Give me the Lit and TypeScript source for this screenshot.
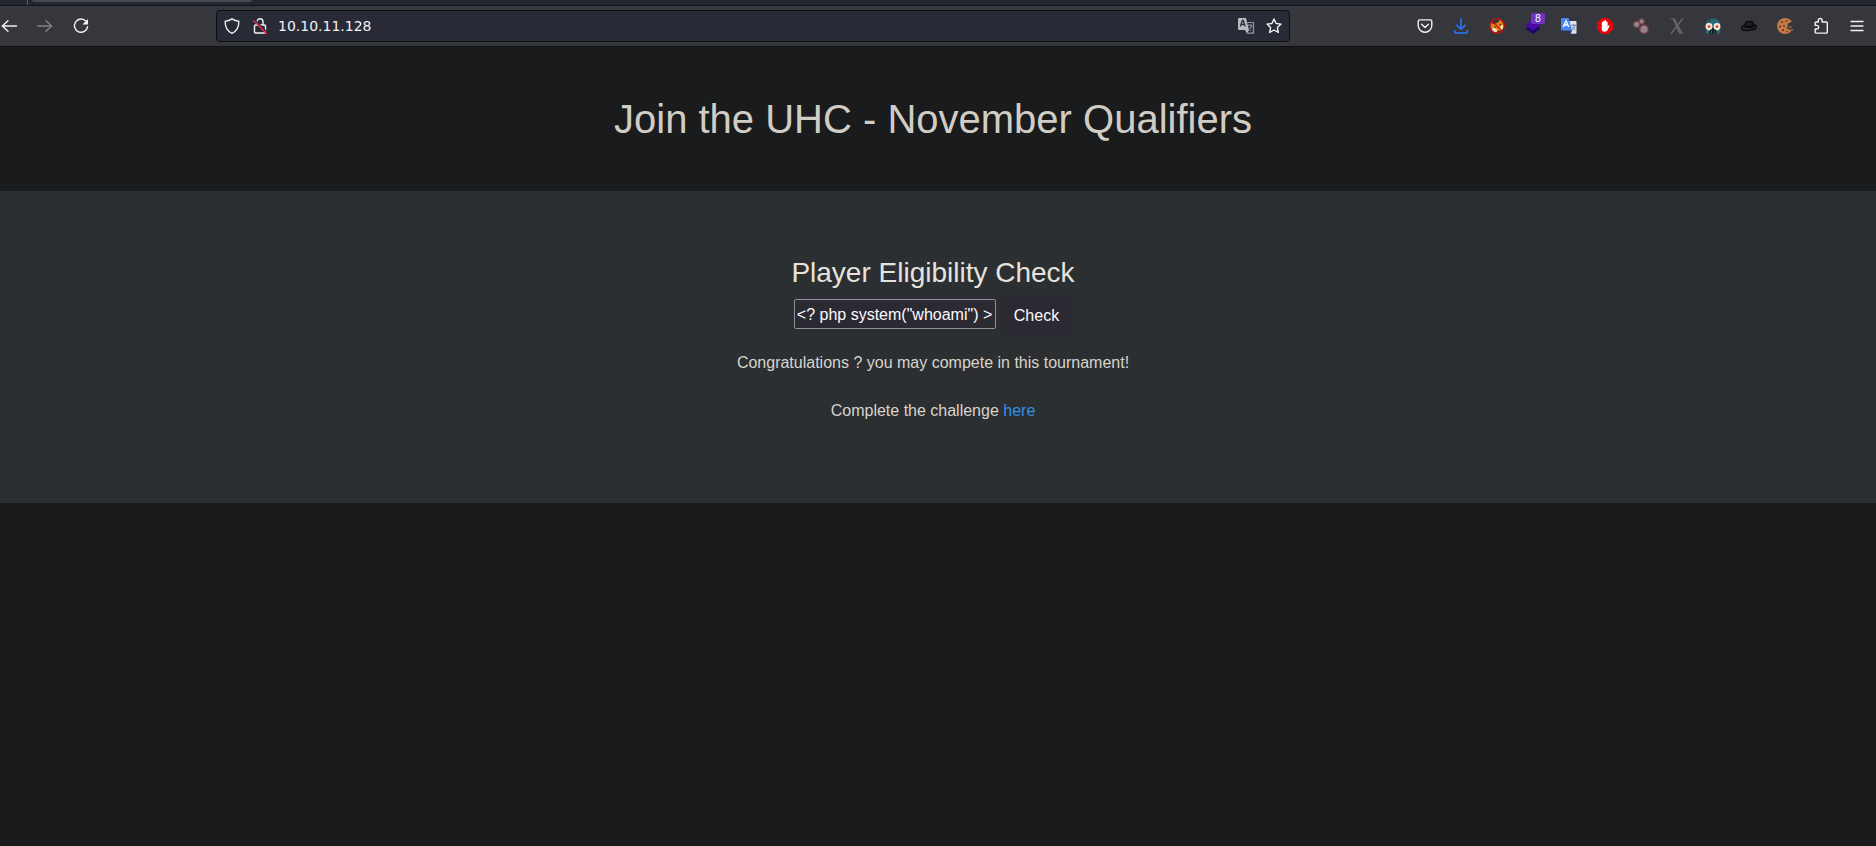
import { LitElement, html, css, svg } from "lit";
import { customElement } from "lit/decorators.js";

const icon = (body: unknown, cls = "") =>
  html`<svg class="icon ${cls}" viewBox="0 0 16 16" aria-hidden="true">${body}</svg>`;

const back = svg`<path class="line" d="M15.5 8H1.2M7 2.7L1.4 8L7 13.3"/>`;
const forward = svg`<path class="line" d="M.5 8h14.3M9 2.7L14.6 8L9 13.3"/>`;
const reload = svg`<path class="line" d="M13.1 3.4A6.600 6.600 0 1 0 14.600 8.600"/><path class="fill" d="M15 .9v5.600H9.400z"/>`;
const shield = svg`<path class="line" d="M8 .9c2 1.4 4.300 2.100 6.800 2.200.2 5.300-1.500 9.900-6.800 12.200C2.700 13 1 8.400 1.200 3.100 3.700 3 6 2.300 8 .9z"/>`;
const lock = svg`<path class="line" d="M5 6.500V3.800a3 3 0 0 1 6 0V7M3.700 7h8.600a1.200 1.200 0 0 1 1.200 1.200v5.600a1.200 1.200 0 0 1-1.200 1.200H3.700a1.200 1.200 0 0 1-1.200-1.200V8.200A1.200 1.200 0 0 1 3.700 7z"/><path d="M2.400 1.600L15.400 14.600" stroke="#282a36" stroke-width="1.400"/><path d="M1.200 2.200L14.700 15.600" stroke="#e22850" stroke-width="1.500"/>`;
const pageTranslate = svg`<path fill="#b9bac0" d="M1 0h7l3 12H1a1 1 0 0 1-1-1V1a1 1 0 0 1 1-1z"/><path d="M2.300 8.500L4.400 2.500h.8l2.100 6M3 6.500h3.600" fill="none" stroke="#282a36" stroke-width="1.300"/><path fill="#b9bac0" d="M7 12h4l-2 3.500z"/><path d="M9.500 4.500h6v10.700H8.800M10.700 8c0-1.600 3.300-1.600 3 .2-.2 1-1.500.8-1.500 2.300m0 1v1.300" fill="none" stroke="#96979e" stroke-width="1.200"/>`;
const star = svg`<path class="line" d="M8 1l2.100 4.500 4.900.6-3.600 3.400.9 4.900L8 12l-4.300 2.400.9-4.900L1 6.100l4.900-.6z"/>`;
const pocket = svg`<path class="line" d="M2.700 1.900h10.600a1.500 1.500 0 0 1 1.500 1.500v4a6.800 6.800 0 0 1-13.600 0v-4a1.500 1.500 0 0 1 1.500-1.500z"/><path class="line" d="M4.600 6.200L8 9.400l3.400-3.200"/>`;
const download = svg`<path fill="none" stroke="#2a78ff" stroke-width="1.500" d="M8 .3v11M3.300 6.700L8 11.300l4.700-4.600M1.700 12v1.700q0 1.300 1.300 1.300h10q1.300 0 1.300-1.300V12"/>`;
const fox = svg`<path fill="#e2820f" d="M1.500 9.500L2 5l3.300 1.300L9.500 4l1.800-3 2.400 3.500L14.500 9l-2.500 3.500L7.500 14z"/><path fill="#f6dfb8" d="M2.500 10.500l3.500-.5 2.500 2-1.200 2.800-3.300-1.500zM11.500 7.800l3-1.300-.3 4-2.700 1.800z"/><path fill="#5b2b10" d="M5.500 8.500h1.600v1.300H5.500zM10.700 6h1.400v1.400h-1.400zM8.600 12.500h1.800v1.400H8.600z"/><circle cx="8" cy="8" r="7.400" fill="none" stroke="#c40c0c" stroke-width="1.200"/><path d="M2.900 2.900l10.200 10.200" stroke="#c40c0c" stroke-width="1.200"/>`;
const layers = svg`<path fill="#1d0a6b" d="M.3 10.500L8 5.300l7.700 5.200L8 16z"/><path fill="#4b0aa8" d="M.3 7L8 1.500 15.700 7 8 12.300z"/>`;
const translate = svg`<path fill="#dde1e8" d="M7 3h7.500q1 0 1 1v10.800q0 1-1 1H10z"/><path fill="none" stroke="#6784b4" d="M10.300 7.200h4.600M12.500 6v1.200M14.300 7.200q-.7 3-3.500 5M11.200 8.600q1 2 3.200 3.300"/><path fill="#4a86f0" d="M1 0h6.500l3.700 12.500H1q-1 0-1-1V1q0-1 1-1z"/><path fill="#214c9c" d="M7.400 12.500h3.800L9.800 15.800z"/><path fill="none" stroke="#fff" stroke-width="1.300" d="M2.200 9L5 2.800 7.800 9M3.200 7h3.600"/>`;
const stopHand = svg`<path fill="#e4060b" d="M4.700 0h6.600L16 4.700v6.600L11.300 16H4.700L0 11.300V4.700z"/><path fill="#fff" d="M4.800 4.200q.8-.7 1.400 0V3q.8-.8 1.500 0v-.6q.8-.7 1.500 0V4q.8-.7 1.400 0v4.200l1-1q.9-.2 1 .6l-2 4.200q-.9 1.700-3 1.700-2.800 0-2.800-3z"/>`;
const dots = svg`<g fill="#98858b" stroke="#7d454b" stroke-width="1.200"><circle cx="3.600" cy="6.500" r="3"/><circle cx="8.600" cy="3.400" r="2.500"/><circle cx="11" cy="11.300" r="4.100"/></g>`;
const cross = svg`<path fill="#636363" d="M1.800.2h4L14 15.800h-3.800L3.700 1.500H1.800z"/><path fill="none" stroke="#636363" stroke-width="1.700" d="M14 .3L2 15.700"/>`;
const spy = svg`<path fill="#286975" d="M.8 7Q1 .4 8 .4T15.200 7v8.600H.8z"/><path fill="#122c33" d="M3 3l2.500-1.500L5 3.500zM4 9.500h8L13 13H3z"/><path fill="#e8c6b0" d="M2.500 11h2.500v1.500H2.500zM11 11h2.500v1.500H11z"/><circle cx="4" cy="8.500" r="2.800" fill="#f5d8c8" stroke="#f3efe9" stroke-width="1.300"/><circle cx="12" cy="8.500" r="2.800" fill="#f5d8c8" stroke="#f3efe9" stroke-width="1.300"/><circle cx="4" cy="8.500" r="1.500" fill="#dd5a38"/><circle cx="12" cy="8.500" r="1.500" fill="#dd5a38"/><path fill="#101b20" d="M4.500 12.800h7v2.800h-7z"/><path fill="#a9b4b5" d="M6 13.500h1v1H6zM9 13.500h1v1H9z"/>`;
const hat = svg`<ellipse cx="8" cy="9.500" rx="7.500" ry="2.900" transform="rotate(-6 8 9.500)" fill="#292b30" stroke="#08090a" stroke-width="1.300"/><path fill="#1d1e22" stroke="#08090a" stroke-width="1.200" d="M4 9L4.600 4.200Q8 2.700 11.700 3.900L12.500 8.500Q8 10.500 4 9z"/><path d="M4.200 8q4 1.500 8.100 0" fill="none" stroke="#08090a" stroke-width="1.500"/>`;
const cookie = svg`<path fill="#c47a49" d="M8 0q4.300 0 7 3.600L10.300 6l1 2.200-1.800 1.600 2 1.200 3 1.800Q12 16 8 16A8 8 0 1 1 8 0z"/><g fill="#6c3620"><circle cx="5" cy="4" r="1.100"/><circle cx="9.500" cy="3" r="1"/><circle cx="3.200" cy="8.500" r="1.100"/><circle cx="7" cy="8" r=".9"/><circle cx="6" cy="12.200" r="1.100"/><circle cx="10" cy="13.500" r=".8"/></g><path fill="#c47a49" d="M12.300 8.700l1.500-.7.700 1.700-1.500.7zM14.300 11h1.500v1.400h-1.500z"/>`;
const puzzle = svg`<path class="line" d="M5.300 4V2.400a1.900 1.900 0 0 1 3.800 0V4h4.300q.9 0 .9.900v9.300q0 .9-.9.900H3.100q-.9 0-.9-.9V11h1.600a1.800 1.800 0 0 0 0-3.600H2.200V4.900q0-.9.900-.9z"/>`;
const menu = svg`<path class="line" d="M2 3.500h12M2 8h12M2 12.500h12"/>`;

const extensions = [
  { label: "Save to Pocket", art: pocket },
  { label: "Downloads", art: download },
  { label: "Fox proxy", art: fox },
  { label: "Technology profiler", art: layers, badge: "8" },
  { label: "Translator", art: translate },
  { label: "Content blocker", art: stopHand },
  { label: "Containers", art: dots },
  { label: "X tools", art: cross },
  { label: "User agent", art: spy },
  { label: "Hat tools", art: hat },
  { label: "Cookie editor", art: cookie },
  { label: "Extensions", art: puzzle },
  { label: "Menu", art: menu },
];

@customElement("browser-chrome")
export class BrowserChrome extends LitElement {
  static styles = css`
    :host { display: block; font-family: "DejaVu Sans", sans-serif; color: #f2f2f4; }
    .tabs { height: 5px; background: #23252f; border-bottom: 1px solid #14151c; display: flex; overflow: hidden; }
    .divider { width: 28px; border-right: 1px solid #5b5d66; box-sizing: border-box; }
    .tab { width: 220px; height: 2px; margin-left: 4px; background: #464850; border-radius: 0 0 3px 3px; }
    .toolbar { display: flex; align-items: center; height: 40px; padding-right: 1px; overflow: hidden; background: #35373d; border-bottom: 1px solid #0e0f12; }
    .nav, .extensions { display: flex; flex: none; }
    .nav { margin-left: -9px; }
    button { appearance: none; border: 0; background: none; padding: 0; margin: 0; color: inherit; font: inherit; display: flex; align-items: center; justify-content: center; }
    .tool { position: relative; width: 36px; height: 32px; }
    .tool:disabled { opacity: 0.4; }
    .icon { width: 16px; height: 16px; display: block; overflow: visible; }
    .line { fill: none; stroke: currentColor; stroke-width: 1.4; stroke-linejoin: round; stroke-linecap: round; }
    .fill { fill: currentColor; }
    .address { flex: 1; min-width: 0; display: flex; align-items: center; box-sizing: border-box; height: 32px; margin: 0 117px; border: 1px solid #0d0e13; border-radius: 4px; background: #282a36; padding: 0 1px; }
    .small { width: 28px; height: 28px; }
    .url { flex: 1; min-width: 0; border: 0; outline: 0; padding: 0 4px; background: none; color: inherit; font: 14px/20px "DejaVu Sans", sans-serif; }
    .badge { position: absolute; top: 3px; left: 16px; width: 14px; height: 11px; border-radius: 2px; background: #6b35bf; font: 10px/11px "DejaVu Sans", sans-serif; text-align: center; }
  `;

  render() {
    return html`
      <div class="tabs"><span class="divider"></span><span class="tab"></span></div>
      <div class="toolbar">
        <nav class="nav">
          <button class="tool" aria-label="Back">${icon(back)}</button>
          <button class="tool" aria-label="Forward" disabled>${icon(forward)}</button>
          <button class="tool" aria-label="Reload">${icon(reload)}</button>
        </nav>
        <div class="address">
          <button class="small" aria-label="Tracking protection">${icon(shield)}</button>
          <button class="small" aria-label="Connection is not secure">${icon(lock)}</button>
          <input class="url" type="text" aria-label="Address" .value=${"10.10.11.128"} />
          <button class="small" aria-label="Translate page">${icon(pageTranslate)}</button>
          <button class="small" aria-label="Bookmark">${icon(star)}</button>
        </div>
        <div class="extensions">
          ${extensions.map(
            (e) => html`<button class="tool" aria-label=${e.label}>
              ${icon(e.art)}${e.badge ? html`<span class="badge">${e.badge}</span>` : ""}
            </button>`
          )}
        </div>
      </div>
    `;
  }
}

@customElement("app-root")
export class AppRoot extends LitElement {
  static styles = css`
    :host { display: block; min-height: 100vh; background: #1a1b1c; color: #d8d4cd; font: 16px/24px "Liberation Sans", Arial, sans-serif; text-align: center; }
    .hero { padding: 48px 10px 48px 0; }
    h1 { margin: 0; font-size: 40px; line-height: 48px; font-weight: 400; color: #d1cdc4; }
    .panel { padding: 64px 10px 80px 0; background: #2b2f31; }
    h2 { margin: 0 0 6px; font-size: 28px; line-height: 36px; font-weight: 400; color: #e6e3dd; }
    .check { display: flex; justify-content: center; align-items: flex-start; gap: 5px; margin-bottom: 16px; }
    .player { box-sizing: border-box; width: 202px; height: 30px; margin: 2px 0 0; padding: 2px 2px 0; border: 1px solid #8f8f9d; border-radius: 2px; background: #2b2a33; color: #fbfbfe; font: inherit; outline: 0; }
    .submit { height: 38px; padding: 6px 12px; border: 1px solid #2c2a32; border-radius: 4px; background: #2b2a33; color: #fbfbfe; font: inherit; }
    p { margin: 0; }
    p + p { margin-top: 24px; }
    a { color: #3391e6; text-decoration: none; }
  `;

  render() {
    return html`
      <browser-chrome></browser-chrome>
      <header class="hero"><h1>Join the UHC - November Qualifiers</h1></header>
      <main class="panel">
        <h2 id="check-title">Player Eligibility Check</h2>
        <form class="check" @submit=${(e: Event) => e.preventDefault()}>
          <input class="player" type="text" aria-labelledby="check-title" .value=${'<? php system("whoami") >'} />
          <button class="submit" type="submit">Check</button>
        </form>
        <p>Congratulations ? you may compete in this tournament!</p>
        <p>Complete the challenge <a href="#challenge">here</a></p>
      </main>
    `;
  }
}
